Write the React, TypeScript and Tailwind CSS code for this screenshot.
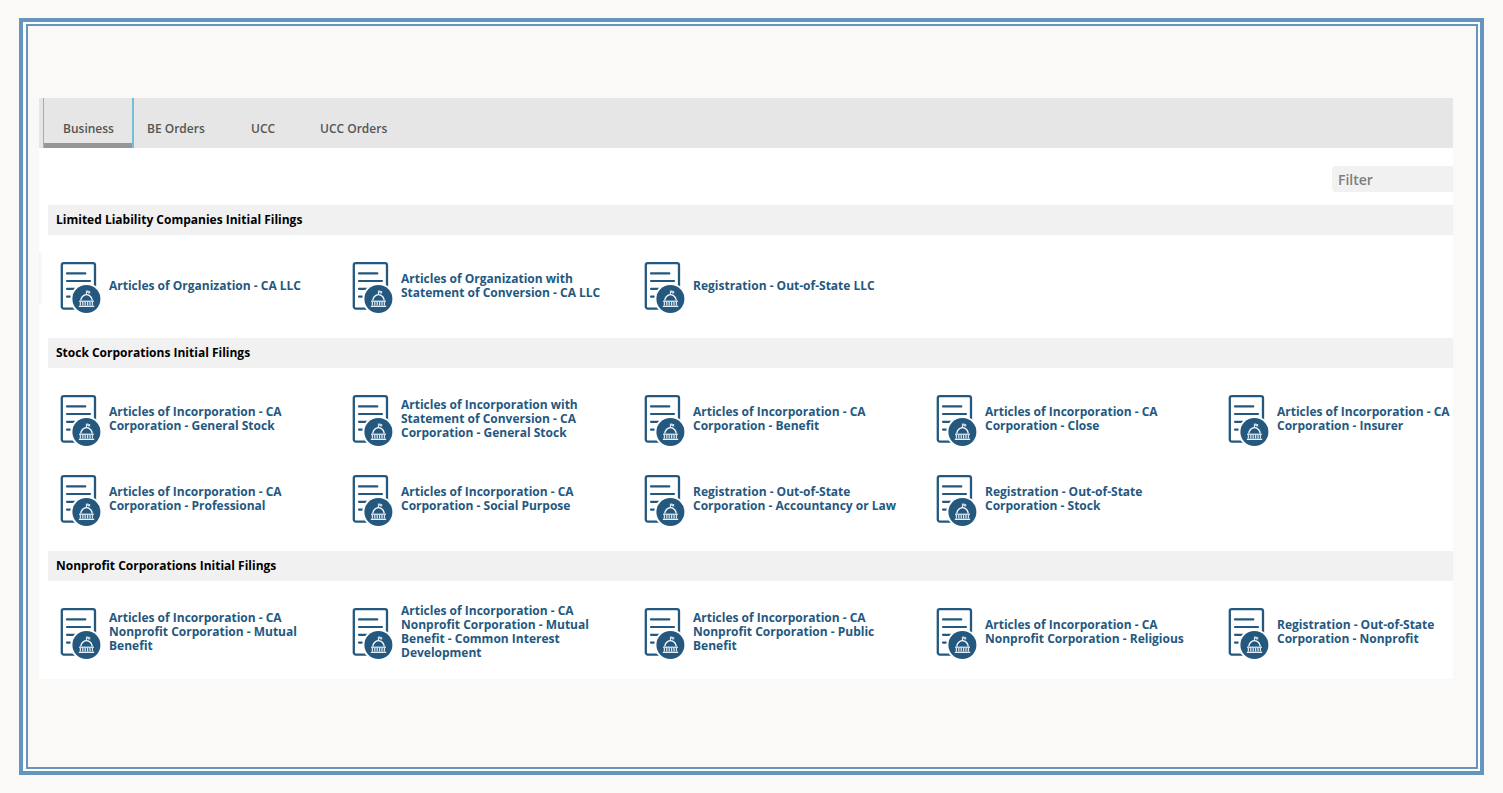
import { useState } from "react";

const TABS = [
  { label: "Business", className: "w-[88px] pl-[19px]" },
  { label: "BE Orders", className: "w-[104px] pl-[13px]" },
  { label: "UCC", className: "w-[69px] pl-[13px]" },
  { label: "UCC Orders", className: "w-[104px] pl-[13px]" },
];

const SECTIONS = [
  {
    title: "Limited Liability Companies Initial Filings",
    items: [
      "Articles of Organization - CA LLC",
      "Articles of Organization with Statement of Conversion - CA LLC",
      "Registration - Out-of-State LLC",
    ],
  },
  {
    title: "Stock Corporations Initial Filings",
    items: [
      "Articles of Incorporation - CA Corporation - General Stock",
      "Articles of Incorporation with Statement of Conversion - CA Corporation - General Stock",
      "Articles of Incorporation - CA Corporation - Benefit",
      "Articles of Incorporation - CA Corporation - Close",
      "Articles of Incorporation - CA Corporation - Insurer",
      "Articles of Incorporation - CA Corporation - Professional",
      "Articles of Incorporation - CA Corporation - Social Purpose",
      "Registration - Out-of-State Corporation - Accountancy or Law",
      "Registration - Out-of-State Corporation - Stock",
    ],
  },
  {
    title: "Nonprofit Corporations Initial Filings",
    items: [
      "Articles of Incorporation - CA Nonprofit Corporation - Mutual Benefit",
      "Articles of Incorporation - CA Nonprofit Corporation - Mutual Benefit - Common Interest Development",
      "Articles of Incorporation - CA Nonprofit Corporation - Public Benefit",
      "Articles of Incorporation - CA Nonprofit Corporation - Religious",
      "Registration - Out-of-State Corporation - Nonprofit",
    ],
  },
];

export default function App() {
  const [active, setActive] = useState("Business");
  const [filter, setFilter] = useState("");

  return (
    <div className="flex min-h-screen bg-[#faf9f7] px-[19px] py-[18px] font-['Open_Sans',sans-serif]">
      <div className="flex flex-1 border-4 border-[#6595bd] bg-white pt-0.5 pr-0.5 pb-0.5 pl-[3px]">
        <div className="min-w-0 flex-1 border-2 border-[#6595bd] bg-[#faf9f7] pt-[72px] pr-[23px] pb-20 pl-[11px]">
          <main className="relative overflow-hidden bg-white">
            <nav className="flex h-[50px] bg-[#e6e6e6] pl-1">
              {TABS.map((tab) => (
                <button
                  key={tab.label}
                  onClick={() => setActive(tab.label)}
                  className={`flex flex-col border-[#74bddb] text-left text-xs leading-4 font-semibold text-[#555] ${
                    active === tab.label ? "border-r-2 border-l" : ""
                  }`}
                >
                  <span className={`flex flex-1 items-center pt-[17px] ${tab.className}`}>{tab.label}</span>
                  <span className={`h-[5px] w-full ${active === tab.label ? "bg-[#969696]" : ""}`} />
                </button>
              ))}
            </nav>

            <div className="flex justify-end pt-[18px] pb-[13px]">
              <input
                type="text"
                aria-label="Filter"
                placeholder="Filter"
                value={filter}
                onChange={(e) => setFilter(e.target.value)}
                className="h-[26px] w-[121px] rounded-l bg-[#f1f1f1] px-[6px] text-sm font-semibold text-[#555] outline-none placeholder:text-[#7d7d7d]"
              />
            </div>

            <div className="-mb-[5px]">
              {SECTIONS.map((section) => (
                <FilingSection key={section.title} {...section} filter={filter} />
              ))}
            </div>

            {/* Collapsed drawer edge */}
            <span className="absolute top-[154px] left-0 h-[52px] w-1 rounded-r bg-gradient-to-r from-[#f3f3f2] to-white" />
          </main>
        </div>
      </div>
    </div>
  );
}

function FilingSection({ title, items, filter }: { title: string; items: string[]; filter: string }) {
  const shown = items.filter((item) => item.toLowerCase().includes(filter.toLowerCase()));

  return (
    <section className="pl-[9px]">
      <h2 className="h-[30px] bg-[#f1f1f1] pl-2 text-xs leading-[30px] font-bold text-black">{title}</h2>
      <ul className="-mr-[67px] grid auto-rows-[80px] grid-cols-5 pt-[11px] pb-3 pl-3 text-xs leading-[14px]">
        {shown.map((item) => (
          <li key={item} className="flex items-center">
            <a href="#" className="flex items-center gap-[7px] font-bold text-[#24587f]">
              <FilingIcon />
              <span className="max-w-[210px]">{item}</span>
            </a>
          </li>
        ))}
      </ul>
    </section>
  );
}

function FilingIcon() {
  return (
    <svg viewBox="0 0 42 54" fill="none" className="h-[54px] w-[42px] shrink-0">
      <rect x="1.8" y="4.2" width="33.2" height="45.4" rx="2" stroke="#24587f" strokeWidth="2.3" />
      <path d="M7 14.4h18.3M7 22h23M7 29.8h8M7 37.6h3" stroke="#24587f" strokeWidth="2.2" strokeLinecap="round" />
      <circle cx="26.4" cy="40" r="16" fill="#fff" />
      <circle cx="26.4" cy="40" r="14" fill="#24587f" />
      <path d="M26.4 36v-4.2" stroke="#fff" strokeWidth="1" />
      <path d="M26.4 31.4h1.8l.5.7h1.5v2.3h-1.9l-.5-.7h-1.4z" fill="#c5d5e2" />
      <path d="M20.8 41.6a5.7 5.9 0 0 1 11.4 0" stroke="#fff" strokeWidth="1.3" />
      <path d="M19 42.2h15" stroke="#fff" strokeWidth="1.1" />
      <path d="M20.4 42.5v4M22.8 42.5v4M25.2 42.5v4M27.6 42.5v4M30 42.5v4M32.4 42.5v4" stroke="#d8e3ec" strokeWidth="1.3" />
      <path d="M18.8 47.3h15.4" stroke="#fff" strokeWidth="1.2" />
    </svg>
  );
}
